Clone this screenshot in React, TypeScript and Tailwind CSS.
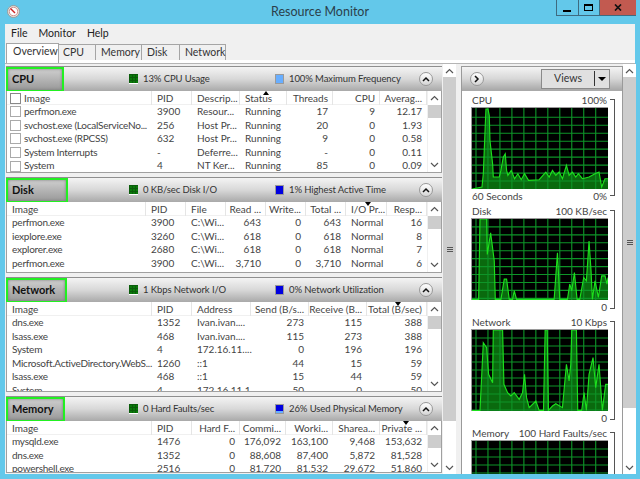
import React from "react";

type Col = { label: string; right?: boolean };

type SectionProps = {
  title: string;
  labelClass: string;
  heightClass: string;
  grid: string;
  legend1: string;
  legend2: string;
  swatch2: string;
  cols: Col[];
  rows: string[][];
  checks?: boolean;
  sortMark?: React.ReactNode;
};

const UpChevron = () => (
  <svg width="9" height="6" viewBox="0 0 9 6" fill="none" stroke="#555" strokeWidth="1.2">
    <path d="M1 5 L4.5 1.5 L8 5" />
  </svg>
);

const DownChevron = () => (
  <svg width="9" height="6" viewBox="0 0 9 6" fill="none" stroke="#555" strokeWidth="1.2">
    <path d="M1 1 L4.5 4.5 L8 1" />
  </svg>
);

const Grip = () => (
  <div className="flex flex-col gap-[1px]">
    <div className="h-[1px] w-[6px] bg-[#555]" />
    <div className="h-[1px] w-[6px] bg-[#555]" />
    <div className="h-[1px] w-[6px] bg-[#555]" />
  </div>
);

const GreenSwatch = () => (
  <div className="h-[10px] w-[9px] shrink-0 border-b border-b-white bg-[#0a7a0a] bg-[linear-gradient(#0a5c0a_1px,transparent_1px),linear-gradient(90deg,#0a5c0a_1px,transparent_1px)] bg-[length:3px_3px]" />
);

const CollapseButton = () => (
  <div className="flex h-[14px] w-[14px] items-center justify-center rounded-full border border-[#999] bg-gradient-to-b from-white to-[#d5d5d5]">
    <svg width="8" height="6" viewBox="0 0 8 6" fill="none" stroke="#111" strokeWidth="1.5">
      <path d="M1 5 L4 2 L7 5" />
    </svg>
  </div>
);

function Section(p: SectionProps) {
  return (
    <div className={"flex flex-col border-t border-[#8f8f8f] " + p.heightClass}>
      <div className="flex h-[24px] shrink-0 items-center bg-gradient-to-b from-[#f4f4f4] via-[#d8d8d8] to-[#a9a9a9]">
        <div className="h-full w-[123px] shrink-0">
          <div
            className={
              "flex h-[25px] items-center border-2 border-[#22f022] bg-gradient-to-b from-[#cfcfcf] to-[#999] pl-[4px] text-[11px] font-bold text-[#111] shadow-[inset_0_0_3px_#777] " +
              p.labelClass
            }
          >
            {p.title}
          </div>
        </div>
        <div className="flex w-[146px] shrink-0 items-center gap-[5px] whitespace-nowrap text-[9.5px] tracking-[-0.1px] text-[#333]">
          <GreenSwatch />
          <span>{p.legend1}</span>
        </div>
        <div className="flex flex-1 items-center gap-[5px] whitespace-nowrap text-[9.5px] tracking-[-0.1px] text-[#333]">
          <div className={"h-[10px] w-[9px] shrink-0 " + p.swatch2} />
          <span>{p.legend2}</span>
        </div>
        <div className="mr-[9px]">
          <CollapseButton />
        </div>
      </div>
      <div className="flex min-h-0 flex-1 border-x border-b border-[#a0a0a0] bg-white">
        <div className="flex w-[420px] shrink-0 flex-col overflow-hidden">
          <div className={"relative grid h-[14px] shrink-0 border-b border-[#f0f0f0] " + p.grid}>
            {p.cols.map((c, i) => (
              <div
                key={c.label}
                className={
                  "whitespace-nowrap border-r border-[#e5e5e5] text-[10px] leading-[14px] text-[#444] " +
                  (c.right ? "pr-[4px] text-right " : "pl-[5px] ") +
                  (i === 0 && p.checks ? "flex items-center gap-[3px] !pl-[3px]" : "")
                }
              >
                {i === 0 && p.checks && <span className="h-[11px] w-[11px] shrink-0 border border-[#888]" />}
                {c.label}
              </div>
            ))}
            {p.sortMark}
          </div>
          <div className="min-h-0 flex-1 overflow-hidden">
            {p.rows.map((r, ri) => (
              <div key={ri} className={"grid h-[13.6px] " + p.grid}>
                {r.map((v, i) => (
                  <div
                    key={i}
                    className={
                      "whitespace-nowrap text-[10px] leading-[13.6px] text-[#444] " +
                      (p.cols[i].right ? "pr-[5px] text-right " : "pl-[5px] ") +
                      (i === 0 ? "tracking-[-0.25px] " : "") +
                      (i === 0 && p.checks ? "flex items-center gap-[3px] !pl-[3px]" : "")
                    }
                  >
                    {i === 0 && p.checks && <span className="h-[11px] w-[11px] shrink-0 border border-[#aaa]" />}
                    {v}
                  </div>
                ))}
              </div>
            ))}
          </div>
        </div>
        <div className="flex w-[14px] shrink-0 flex-col border-l border-[#f0f0f0]">
          <div className="flex h-[14px] items-center justify-center"><UpChevron /></div>
          <div className="h-[13px] bg-[#cdcdcd]" />
          <div className="flex-1" />
          <div className="flex h-[14px] items-center justify-center"><DownChevron /></div>
        </div>
      </div>
    </div>
  );
}

const vLines = [100, 136, 172, 208, 244, 280, 316, 352, 388, 424, 460];

// graph traces are in the coordinates of the reference crop, so the viewBox just frames them
function Graph({ top, height, offset, trace }: { top: number; height: number; offset: number; trace?: string }) {
  const hLines: number[] = [];
  for (let y = top + offset; y < top + height; y += 24) hLines.push(y);
  const base = top + height;
  return (
    <div className="h-[82px] w-[137px] border-t border-l border-[#9a9a9a] bg-black">
      <svg className="block h-full w-full" viewBox={`88 ${top} 409 ${height}`} preserveAspectRatio="none">
        {trace && <polygon points={`88,${base} ${trace} 497,${base}`} fill="#0a6a0e" />}
        {hLines.map((y) => (
          <line key={y} x1="88" x2="497" y1={y} y2={y} stroke="#0e9428" strokeWidth="3.4" />
        ))}
        {vLines.map((x) => (
          <line key={x} x1={x} x2={x} y1={top} y2={base} stroke="#0e9428" strokeWidth="3.4" />
        ))}
        {trace && <polyline points={trace} fill="none" stroke="#1de01d" strokeWidth="3.4" />}
      </svg>
    </div>
  );
}

function GraphBlock({
  name,
  scale,
  foot,
  footLeft,
  children,
  bracketClass,
}: {
  name: string;
  scale: string;
  foot?: string;
  footLeft?: string;
  children: React.ReactNode;
  bracketClass: string;
}) {
  return (
    <div className="flex pl-[9px] text-[10px] leading-[14px] text-[#444]">
      <div className="w-[137px] shrink-0">
        <div className="flex h-[14px] justify-between whitespace-nowrap px-[1px]">
          <span>{name}</span>
          <span>{scale}</span>
        </div>
        {children}
        {foot !== undefined && (
          <div className="flex h-[15px] justify-between px-[1px]">
            <span>{footLeft}</span>
            <span>{foot}</span>
          </div>
        )}
      </div>
      <div className={"ml-[2px] mt-[6px] w-[5px] shrink-0 border-y border-r border-[#555] " + bracketClass} />
    </div>
  );
}

const cpuTrace =
  "88,566 118,560 122,520 128,370 130,325 136,325 140,345 142,420 150,490 152,530 170,530 175,510 182,470 188,460 192,510 196,525 206,510 216,535 226,520 236,538 246,520 258,540 290,538 310,515 320,530 330,510 340,525 350,515 360,535 372,495 380,525 390,515 400,530 408,520 420,535 440,530 458,520 470,515 478,560 488,535 497,535";
const diskTrace =
  "88,297 108,297 112,53 132,53 134,160 144,95 155,180 158,296 175,296 185,235 192,235 200,296 210,296 215,270 222,296 335,296 345,155 352,296 375,296 382,250 388,270 396,215 404,296 412,296 424,230 432,240 440,120 446,210 450,296 458,240 468,290 478,225 488,225 494,250 497,230";
const netTrace =
  "88,629 112,629 122,425 132,440 138,520 150,545 152,387 180,387 184,550 195,575 205,585 215,575 230,595 240,575 246,520 252,590 260,620 280,600 290,628 303,628 308,387 314,387 318,628 330,615 340,608 360,620 372,490 380,540 385,490 388,387 402,387 406,628 418,628 425,575 432,628 440,520 452,470 460,560 470,490 480,628 490,550 497,550";

const SortMark = ({ className }: { className: string }) => (
  <div className={"absolute top-0 h-0 w-0 border-x-[3px] border-t-[4px] border-x-transparent border-t-black " + className} />
);

export default function App() {
  return (
    <div className="flex h-[479px] w-[640px] flex-col overflow-hidden bg-[#63c8ea] font-['Lato',sans-serif]">
      {/* title bar */}
      <div className="relative flex h-[24px] shrink-0 items-start justify-between">
        <div className="ml-[7px] mt-[5px]">
          <svg width="13" height="13" viewBox="0 0 13 13">
            <circle cx="6.5" cy="6.5" r="6" fill="#e8e4dc" stroke="#999" />
            <circle cx="6.5" cy="6.5" r="4.2" fill="#fff" stroke="#b55" strokeWidth="0.6" />
            <path d="M3.5 3.5 L8 8" stroke="#c22" strokeWidth="1.4" />
          </svg>
        </div>
        <div className="mt-[3px] pl-[64px] text-[12.5px] leading-[18px] text-[#2b3f4a]">Resource Monitor</div>
        <div className="mr-[4px] flex h-[16px] border-b border-l border-[#3e6b80]">
          <div className="flex w-[22px] items-end justify-center border-r border-[#3e6b80] pb-[3px]">
            <div className="h-[2px] w-[8px] bg-black" />
          </div>
          <div className="flex w-[21px] items-center justify-center border-r border-[#3e6b80]">
            <div className="h-[7px] w-[9px] border border-t-2 border-black" />
          </div>
          <div className="flex w-[36px] items-center justify-center bg-[#c25a50]">
            <svg width="8" height="7" viewBox="0 0 8 7" stroke="#111" strokeWidth="1.7">
              <path d="M1 0.5 L7 6.5 M7 0.5 L1 6.5" />
            </svg>
          </div>
        </div>
      </div>

      {/* window client */}
      <div className="ml-[5px] flex h-[450px] w-[630px] shrink-0 flex-col bg-[#f0f0f0]">
        <div className="flex h-[19px] shrink-0 items-center gap-[11px] pl-[6px] text-[10.5px] text-[#222]">
          <span>File</span>
          <span>Monitor</span>
          <span>Help</span>
        </div>
        <div className="flex h-[17px] shrink-0 pl-[1px] text-[10.5px] leading-[15px] text-[#333]">
          <div className="z-10 h-[20px] w-[53px] border-x border-t border-[#a5a5a5] bg-white pl-[6px]">Overview</div>
          <div className="mt-[1px] w-[37px] border-r border-t border-[#a5a5a5] bg-[#f0f0f0] pl-[4px]">CPU</div>
          <div className="mt-[1px] w-[46px] border-r border-t border-[#a5a5a5] bg-[#f0f0f0] pl-[5px]">Memory</div>
          <div className="mt-[1px] w-[38px] border-r border-t border-[#a5a5a5] bg-[#f0f0f0] pl-[5px]">Disk</div>
          <div className="mt-[1px] w-[46px] border-r border-t border-[#a5a5a5] bg-[#f0f0f0] pl-[5px]">Network</div>
        </div>
        <div className="h-[3px] shrink-0 bg-white" />

        <div className="flex min-h-0 flex-1 border-t border-[#b5b5b5]">
          {/* left column */}
          <div className="flex w-[437px] shrink-0 flex-col gap-[4px] pl-[1px] pt-[2px]">
            <Section
              title="CPU"
              labelClass="w-[58px]"
              heightClass="h-[107px]"
              grid="grid-cols-[145px_40px_48px_47px_46px_47px_47px]"
              legend1="13% CPU Usage"
              legend2="100% Maximum Frequency"
              swatch2="bg-[#68aeff] border border-[#9a9a9a]"
              checks
              sortMark={<SortMark className="left-[256px] rotate-180" />}
              cols={[
                { label: "Image" },
                { label: "PID" },
                { label: "Descrip..." },
                { label: "Status" },
                { label: "Threads", right: true },
                { label: "CPU", right: true },
                { label: "Averag...", right: true },
              ]}
              rows={[
                ["perfmon.exe", "3900", "Resour...", "Running", "17", "9", "12.17"],
                ["svchost.exe (LocalServiceNo...", "256", "Host Pr...", "Running", "20", "0", "1.93"],
                ["svchost.exe (RPCSS)", "632", "Host Pr...", "Running", "9", "0", "0.58"],
                ["System Interrupts", "-", "Deferre...", "Running", "-", "0", "0.11"],
                ["System", "4", "NT Ker...", "Running", "85", "0", "0.09"],
              ]}
            />
            <Section
              title="Disk"
              labelClass="w-[62px]"
              heightClass="h-[96px]"
              grid="grid-cols-[139px_40px_40px_40px_40px_40px_41px_40px]"
              legend1="0 KB/sec Disk I/O"
              legend2="1% Highest Active Time"
              swatch2="bg-[#0000e0] border border-[#9a9a9a]"
              sortMark={<SortMark className="left-[358px]" />}
              cols={[
                { label: "Image" },
                { label: "PID" },
                { label: "File" },
                { label: "Read ...", right: true },
                { label: "Write...", right: true },
                { label: "Total ...", right: true },
                { label: "I/O Pr..." },
                { label: "Resp...", right: true },
              ]}
              rows={[
                ["perfmon.exe", "3900", "C:\\Wi...", "643", "0", "643", "Normal", "16"],
                ["iexplore.exe", "3260", "C:\\Wi...", "618", "0", "618", "Normal", "8"],
                ["explorer.exe", "2680", "C:\\Wi...", "618", "0", "618", "Normal", "7"],
                ["perfmon.exe", "3900", "C:\\Wi...", "3,710", "0", "3,710", "Normal", "6"],
              ]}
            />
            <Section
              title="Network"
              labelClass="w-[61px]"
              heightClass="h-[115px]"
              grid="grid-cols-[145px_40px_59px_58px_58px_60px]"
              legend1="1 Kbps Network I/O"
              legend2="0% Network Utilization"
              swatch2="bg-[#0000e0] border border-[#9a9a9a]"
              sortMark={<SortMark className="left-[388px]" />}
              cols={[
                { label: "Image" },
                { label: "PID" },
                { label: "Address" },
                { label: "Send (B/s...", right: true },
                { label: "Receive (B...", right: true },
                { label: "Total (B/sec)", right: true },
              ]}
              rows={[
                ["dns.exe", "1352", "Ivan.ivan....", "273", "115", "388"],
                ["lsass.exe", "468", "Ivan.ivan....", "115", "273", "388"],
                ["System", "4", "172.16.11....", "0", "196", "196"],
                ["Microsoft.ActiveDirectory.WebS...", "1260", "::1", "44", "15", "59"],
                ["lsass.exe", "468", "::1", "15", "44", "59"],
                ["System", "4", "172.16.11.1", "50", "0", "50"],
              ]}
            />
            <Section
              title="Memory"
              labelClass="w-[59px]"
              heightClass="h-[77px]"
              grid="grid-cols-[145px_40px_48px_46px_47px_47px_47px]"
              legend1="0 Hard Faults/sec"
              legend2="26% Used Physical Memory"
              swatch2="bg-[linear-gradient(#0000e0_70%,#68aeff_70%)] border border-[#9a9a9a]"
              sortMark={<SortMark className="left-[396px]" />}
              cols={[
                { label: "Image" },
                { label: "PID" },
                { label: "Hard F...", right: true },
                { label: "Commi...", right: true },
                { label: "Worki...", right: true },
                { label: "Sharea...", right: true },
                { label: "Private ...", right: true },
              ]}
              rows={[
                ["mysqld.exe", "1476", "0", "176,092", "163,100", "9,468", "153,632"],
                ["dns.exe", "1352", "0", "88,608", "87,400", "5,872", "81,528"],
                ["powershell.exe", "2516", "0", "81,720", "81,532", "29,672", "51,860"],
              ]}
            />
          </div>

          {/* left scrollbar */}
          <div className="ml-[1px] flex w-[13px] shrink-0 flex-col">
            <div className="flex h-[13px] items-center justify-center bg-white"><UpChevron /></div>
            <div className="flex h-[344px] items-center justify-center bg-[#cdcdcd]"><Grip /></div>
            <div className="flex-1 bg-white" />
            <div className="flex h-[13px] items-center justify-center bg-white"><DownChevron /></div>
          </div>
          <div className="w-[5px] shrink-0" />

          {/* right panel */}
          <div className="mt-[2px] flex w-[162px] shrink-0 flex-col overflow-hidden border-x border-t border-[#9a9a9a] bg-white">
            <div className="flex h-[24px] shrink-0 items-center justify-between border-b border-[#aaa] bg-gradient-to-b from-[#f4f4f4] via-[#d8d8d8] to-[#a9a9a9] pl-[8px] pr-[12px]">
              <div className="flex h-[14px] w-[14px] items-center justify-center rounded-full border border-[#999] bg-gradient-to-b from-white to-[#d5d5d5]">
                <svg width="6" height="8" viewBox="0 0 6 8" fill="none" stroke="#111" strokeWidth="1.5">
                  <path d="M1 1 L4 4 L1 7" />
                </svg>
              </div>
              <div className="flex h-[20px] w-[69px] items-center border border-[#8a8a8a] bg-[#e0e0e0] text-[10.5px] text-[#333]">
                <span className="flex-1 text-center">Views</span>
                <div className="h-[15px] w-[1px] bg-[#333]" />
                <div className="mx-[3px] h-0 w-0 border-x-[4px] border-t-[4px] border-x-transparent border-t-black" />
              </div>
            </div>
            <div className="flex flex-col pt-[2px]">
              <GraphBlock name="CPU" scale="100%" footLeft="60 Seconds" foot="0%" bracketClass="h-[97px]">
                <Graph top={322} height={244} offset={28} trace={cpuTrace} />
              </GraphBlock>
              <GraphBlock name="Disk" scale="100 KB/sec" foot="0" footLeft="" bracketClass="h-[99px]">
                <Graph top={53} height={245} offset={24} trace={diskTrace} />
              </GraphBlock>
              <GraphBlock name="Network" scale="10 Kbps" foot="0" footLeft="" bracketClass="h-[99px]">
                <Graph top={387} height={243} offset={24} trace={netTrace} />
              </GraphBlock>
              <GraphBlock name="Memory" scale="100 Hard Faults/sec" bracketClass="h-[99px]">
                <Graph top={718} height={243} offset={24} />
              </GraphBlock>
            </div>
          </div>

          {/* right scrollbar */}
          <div className="flex w-[13px] shrink-0 flex-col">
            <div className="flex h-[13px] items-center justify-center bg-white"><UpChevron /></div>
            <div className="flex h-[331px] items-center justify-center bg-[#cdcdcd]"><Grip /></div>
            <div className="flex-1 bg-white" />
            <div className="flex h-[13px] items-center justify-center bg-white"><DownChevron /></div>
          </div>
        </div>
      </div>
    </div>
  );
}
